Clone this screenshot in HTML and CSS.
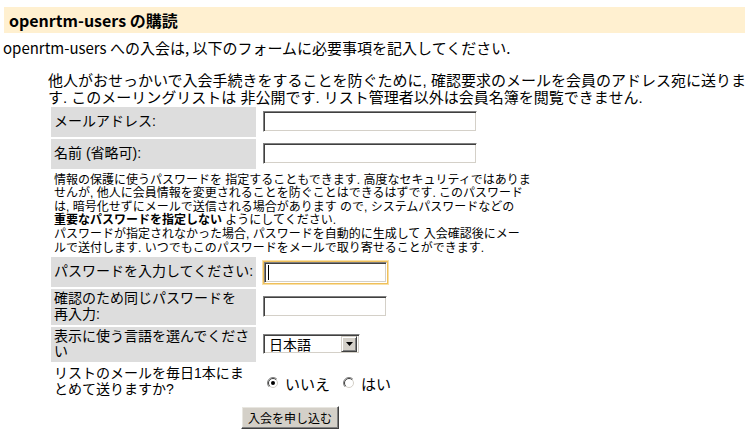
FILE: index.html
```html
<!DOCTYPE html>
<html lang="ja">
<head>
    <meta charset="UTF-8">
    <meta name="viewport" content="width=device-width, initial-scale=1.0">
    <title>openrtm-users の購読</title>
    <link rel="stylesheet" href="styles.css">
</head>
<body>
    <div class="heading">openrtm-users の購読</div>
    <p class="intro">openrtm-users への入会は, 以下のフォームに必要事項を記入してください.</p>

    <form class="subscribe" action="#" method="post">
        <p class="lead">他人がおせっかいで入会手続きをすることを防ぐために, 確認要求のメールを会員のアドレス宛に送りま<br>す. このメーリングリストは 非公開です. リスト管理者以外は会員名簿を閲覧できません.</p>

        <div class="fields">
            <label class="label" for="email"><span>メールアドレス:</span></label>
            <div class="field"><input type="text" id="email" class="text wide"></div>

            <label class="label" for="fullname"><span>名前 (省略可):</span></label>
            <div class="field"><input type="text" id="fullname" class="text wide"></div>

            <div class="help">
                情報の保護に使うパスワードを 指定することもできます. 高度なセキュリティではありま<br>
                せんが, 他人に会員情報を変更されることを防ぐことはできるはずです. このパスワード<br>
                は, 暗号化せずにメールで送信される場合があります ので, システムパスワードなどの<br>
                <b>重要なパスワードを指定しない</b> ようにしてください.<br>
                パスワードが指定されなかった場合, パスワードを自動的に生成して 入会確認後にメー<br>
                ルで送付します. いつでもこのパスワードをメールで取り寄せることができます.
            </div>

            <label class="label" for="pw"><span>パスワードを入力してください:</span></label>
            <div class="field">
                <span class="focus-wrap"><input type="password" id="pw" class="text short focused"></span>
            </div>

            <label class="label tall" for="pw-conf"><span>確認のため同じパスワードを<br>再入力:</span></label>
            <div class="field"><input type="password" id="pw-conf" class="text short"></div>

            <label class="label tall" for="language"><span>表示に使う言語を選んでくださ<br>い</span></label>
            <div class="field">
                <div class="select" id="language">
                    <span class="select-text">日本語</span>
                    <span class="select-btn">
                        <svg width="7" height="4" viewBox="0 0 7 4"><path d="M0 0h7L3.5 4z" fill="#000"/></svg>
                    </span>
                </div>
            </div>

            <div class="label tall plain"><span>リストのメールを毎日1本にま<br>とめて送りますか?</span></div>
            <div class="field radios">
                <span class="radio">
                    <svg width="12" height="12" viewBox="0 0 12 12">
                        <circle cx="6" cy="6" r="5.5" fill="#fff"/>
                        <path d="M2.1 9.9A5.5 5.5 0 0 1 9.9 2.1" stroke="#808080" fill="none"/>
                        <path d="M2.8 9.2A4.5 4.5 0 0 1 9.2 2.8" stroke="#404040" fill="none"/>
                        <path d="M9.2 2.8A4.5 4.5 0 0 1 2.8 9.2" stroke="#d4d0c8" fill="none"/>
                        <circle cx="6" cy="6" r="2" fill="#000"/>
                    </svg>
                    いいえ
                </span>
                <span class="radio">
                    <svg width="12" height="12" viewBox="0 0 12 12">
                        <circle cx="6" cy="6" r="5.5" fill="#fff"/>
                        <path d="M2.1 9.9A5.5 5.5 0 0 1 9.9 2.1" stroke="#808080" fill="none"/>
                        <path d="M2.8 9.2A4.5 4.5 0 0 1 9.2 2.8" stroke="#404040" fill="none"/>
                        <path d="M9.2 2.8A4.5 4.5 0 0 1 2.8 9.2" stroke="#d4d0c8" fill="none"/>
                    </svg>
                    はい
                </span>
            </div>

            <div class="actions">
                <button type="submit" class="submit">入会を申し込む</button>
            </div>
        </div>
    </form>
</body>
</html>
```

FILE: styles.css
```css
body {
    margin: 0;
    font-family: "Noto Sans CJK JP", sans-serif;
    color: #000;
    background-color: #fff;
}

.heading {
    margin: 7px 7px 0 4px;
    padding: 5px;
    background-color: #fff0d0;
    font-size: 16px;
    font-weight: bold;
    line-height: 16px;
}

.intro {
    margin: 6px 0 0 3px;
    font-size: 15px;
    line-height: 18px;
}

.subscribe {
    margin: 0;
}

/* multi-line blocks: a latin primary font keeps the line boxes tight */
.lead,
.label,
.help {
    font-family: "Liberation Sans", "Noto Sans CJK JP", sans-serif;
}

.lead {
    margin: 16px 0 0 48px;
    font-size: 15px;
    line-height: 16.8px;
    white-space: nowrap;
}

.fields {
    display: grid;
    grid-template-columns: 205px 271px;
    column-gap: 2px;
    row-gap: 2px;
    width: 478px;
    margin: 0 0 0 51px;
}

.label {
    display: flex;
    align-items: center;
    box-sizing: border-box;
    min-height: 30px;
    padding: 2px 3px;
    background-color: #dddddd;
    font-size: 14px;
    line-height: 15.7px;
    white-space: nowrap;
}

.label.plain {
    background-color: transparent;
}

.field {
    display: flex;
    align-items: center;
    padding-left: 5px;
}

.text {
    box-sizing: border-box;
    height: 21px;
    padding: 0 3px;
    border: 1px solid;
    border-color: #808080 #fff #fff #808080;
    box-shadow: inset 1px 1px #404040, inset -1px -1px #d4d0c8;
    background-color: #fff;
    font-family: inherit;
    font-size: 14px;
}

.wide {
    width: 214px;
}

.short {
    width: 124px;
}

.focus-wrap {
    position: relative;
    display: inline-block;
    line-height: 0;
}

.focused {
    width: 123px;
    margin-left: 1px;
    box-shadow: inset 1px 1px #404040, inset -1px -1px #d4d0c8, 0 0 0 1px #f0c05a, 0 0 0 2px #f8e0a8;
    outline: none;
}

.focus-wrap::after {
    content: "";
    position: absolute;
    left: 5px;
    top: 3px;
    width: 1px;
    height: 15px;
    background-color: #000;
}

.help {
    grid-column: 1 / 3;
    padding: 3px 3px 0;
    font-size: 12px;
    line-height: 13.6px;
    white-space: nowrap;
}

.help b {
    font-weight: bold;
}

.select {
    display: flex;
    align-items: center;
    box-sizing: border-box;
    width: 97px;
    height: 20px;
    border: 1px solid;
    border-color: #808080 #fff #fff #808080;
    box-shadow: inset 1px 1px #404040, inset -1px -1px #d4d0c8;
    background-color: #fff;
    padding: 1px 2px 1px 1px;
}

.select-text {
    flex: 1;
    padding-left: 4px;
    font-size: 14px;
    line-height: 16px;
}

.select-btn {
    display: flex;
    align-items: center;
    justify-content: center;
    box-sizing: border-box;
    width: 16px;
    height: 16px;
    background-color: #d4d0c8;
    border: 1px solid;
    border-color: #d4d0c8 #404040 #404040 #d4d0c8;
    box-shadow: inset 1px 1px #fff, inset -1px -1px #808080;
}

.radios {
    padding-left: 9px;
    padding-top: 3px;
    gap: 13px;
}

.radio {
    display: flex;
    align-items: center;
    gap: 6px;
    font-size: 15px;
    line-height: 17px;
}

.actions {
    grid-column: 1 / 3;
    display: flex;
    justify-content: center;
    margin-top: 5px;
}

.submit {
    width: 98px;
    height: 23px;
    padding: 0;
    border: 1px solid;
    border-color: #fff #404040 #404040 #fff;
    box-shadow: inset -1px -1px #808080, inset 1px 1px #e8e6e0;
    background-color: #d4d0c8;
    font-family: inherit;
    font-size: 12px;
    color: #000;
    cursor: pointer;
}
```
